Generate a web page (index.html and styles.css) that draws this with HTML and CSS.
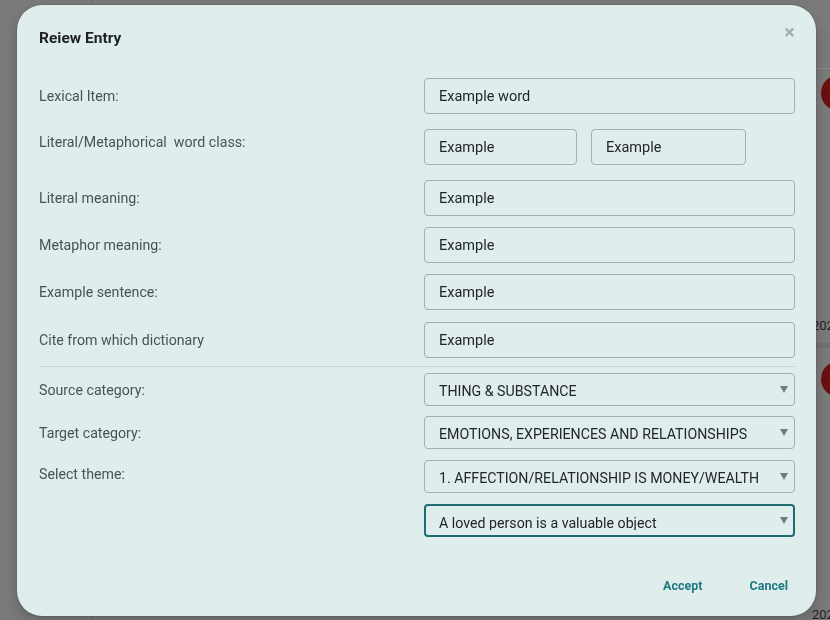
FILE: index.html
```html
<!DOCTYPE html>
<html lang="en">
<head>
<meta charset="utf-8">
<title>Reiew Entry</title>
<link rel="stylesheet" href="styles.css">
</head>
<body>
<div class="page">
  <div class="nav"></div>
  <div class="main"></div>
  <div class="side">
    <div class="side-line"></div>
    <div class="avatar"></div>
    <div class="date">202</div>
    <div class="band"></div>
    <div class="avatar avatar-2"></div>
    <div class="date date-bottom">202</div>
  </div>
</div>

<div class="dialog">
  <div class="dialog-head">
    <h2 class="dialog-title">Reiew Entry</h2>
    <span class="close">&#x2715;</span>
  </div>

  <div class="form">
    <div class="row r1">
      <label class="lbl">Lexical Item:</label>
      <div class="field wide">Example word</div>
    </div>
    <div class="row r2">
      <label class="lbl lbl-up">Literal/Metaphorical&nbsp; word class:</label>
      <div class="pair">
        <div class="field half1">Example</div>
        <div class="field half2">Example</div>
      </div>
    </div>
    <div class="row r3">
      <label class="lbl">Literal meaning:</label>
      <div class="field wide">Example</div>
    </div>
    <div class="row r4">
      <label class="lbl">Metaphor meaning:</label>
      <div class="field wide">Example</div>
    </div>
    <div class="row r5">
      <label class="lbl">Example sentence:</label>
      <div class="field wide">Example</div>
    </div>
    <div class="row r6">
      <label class="lbl">Cite from which dictionary</label>
      <div class="field wide">Example</div>
    </div>

    <div class="divider"></div>

    <div class="row s1">
      <label class="lbl">Source category:</label>
      <div class="select"><span class="sel-text">THING &amp; SUBSTANCE</span><span class="arrow"></span></div>
    </div>
    <div class="row s2">
      <label class="lbl">Target category:</label>
      <div class="select"><span class="sel-text">EMOTIONS, EXPERIENCES AND RELATIONSHIPS</span><span class="arrow"></span></div>
    </div>
    <div class="row s3">
      <label class="lbl lbl-up2">Select theme:</label>
      <div class="select"><span class="sel-text">1. AFFECTION/RELATIONSHIP IS MONEY/WEALTH</span><span class="arrow"></span></div>
    </div>
    <div class="row s4">
      <span class="lbl"></span>
      <div class="select focused"><span class="sel-text clipped">A loved person is a valuable object</span><span class="arrow"></span></div>
    </div>
  </div>

  <div class="actions">
    <button class="btn accept">Accept</button>
    <button class="btn cancel">Cancel</button>
  </div>
</div>
</body>
</html>
```

FILE: styles.css
```css
html, body {
  margin: 0;
  padding: 0;
}
body {
  width: 830px;
  height: 620px;
  overflow: hidden;
  background: #7a7a7a;
  font-family: Roboto, "Liberation Sans", sans-serif;
}

/* dimmed page behind the dialog */
.page {
  display: flex;
  height: 620px;
}
.nav {
  width: 92px;
  border-right: 1px solid #6b6b6b;
}
.main {
  flex: 1;
}
.side {
  width: 18px;
  display: flex;
  flex-direction: column;
  overflow: visible;
}
.side-line {
  margin-top: 68px;
  height: 1px;
  background: #8a8a8a;
  width: 40px;
}
.avatar {
  width: 36px;
  height: 36px;
  flex: none;
  border-radius: 50%;
  background: #6b0f0f;
  margin: 6px 0 0 9px;
}
.date {
  margin-top: 207px;
  font-size: 13px;
  line-height: 15px;
  color: #1e1e1e;
  white-space: nowrap;
}
.band {
  margin-top: 10px;
  height: 5px;
  width: 40px;
  background: #717171;
}
.avatar-2 {
  margin-top: 13px;
}
.date-bottom {
  margin-top: auto;
  margin-bottom: -2px;
}

/* dialog */
.dialog {
  position: fixed;
  left: 17px;
  top: 5px;
  width: 799px;
  height: 611px;
  box-sizing: border-box;
  padding: 23px 21px 0 22px;
  background: #e0eded;
  border-radius: 25px;
  box-shadow: 0 0 2px rgba(0, 0, 0, 0.3), 0 6px 14px rgba(0, 0, 0, 0.18);
  display: flex;
  flex-direction: column;
}
.dialog-head {
  display: flex;
  justify-content: space-between;
  align-items: flex-start;
  height: 20px;
}
.dialog-title {
  margin: 0;
  font-size: 15.5px;
  line-height: 20px;
  font-weight: 700;
  color: #1e2222;
}
.close {
  font-size: 13px;
  line-height: 14px;
  font-weight: 900;
  color: #a6b1b2;
  margin-top: -2px;
  -webkit-text-stroke: 0.6px #a6b1b2;
}

.form {
  margin-top: 30px;
  display: flex;
  flex-direction: column;
}
.row {
  display: flex;
  align-items: center;
}
.lbl {
  width: 385px;
  flex: none;
  font-size: 14.2px;
  color: #4a5353;
}
.lbl-up {
  margin-bottom: 10px;
}
.lbl-up2 {
  margin-bottom: 6px;
}
.r2, .r3 { margin-top: 15px; }
.r4, .r5 { margin-top: 11px; }
.r6 { margin-top: 12px; }

.field {
  box-sizing: border-box;
  height: 36px;
  border: 1px solid #9fb0b1;
  border-radius: 4px;
  padding: 0 14px;
  display: flex;
  align-items: center;
  font-size: 14.5px;
  color: #222626;
}
.wide { width: 371px; }
.pair {
  display: flex;
  gap: 14px;
}
.half1 { width: 153px; }
.half2 { width: 155px; }

.divider {
  margin-top: 8px;
  height: 1px;
  background: #c7d5d5;
}

.select {
  box-sizing: border-box;
  width: 371px;
  height: 33px;
  border: 1px solid #9fb0b1;
  border-radius: 4px;
  padding: 0 6px 0 14px;
  display: flex;
  align-items: center;
  font-size: 14.2px;
  color: #222626;
}
.sel-text {
  flex: 1;
  white-space: nowrap;
  overflow: hidden;
  padding-top: 3px;
}
.arrow {
  flex: none;
  width: 0;
  height: 0;
  border-left: 4px solid transparent;
  border-right: 4px solid transparent;
  border-top: 7px solid #737b7b;
  margin-top: -1px;
}
.s1 { margin-top: 6px; }
.s2 { margin-top: 10px; }
.s3, .s4 { margin-top: 11px; }
.focused {
  border: 2px solid #1f6c72;
  padding-left: 13px;
  padding-right: 5px;
  align-items: flex-start;
}
.focused .arrow {
  margin-top: 11px;
}
.clipped {
  margin-top: 10px;
  padding-top: 0;
  line-height: 14px;
  height: 14px;
  overflow: hidden;
}

.actions {
  margin-top: 41px;
  display: flex;
  justify-content: flex-end;
  padding-right: 7px;
}
.btn {
  background: none;
  border: 0;
  padding: 0;
  font-family: Roboto, "Liberation Sans", sans-serif;
  font-size: 12.5px;
  line-height: 16px;
  font-weight: 700;
  color: #1d7a80;
  cursor: pointer;
}
.accept { margin-right: 47px; }
```
